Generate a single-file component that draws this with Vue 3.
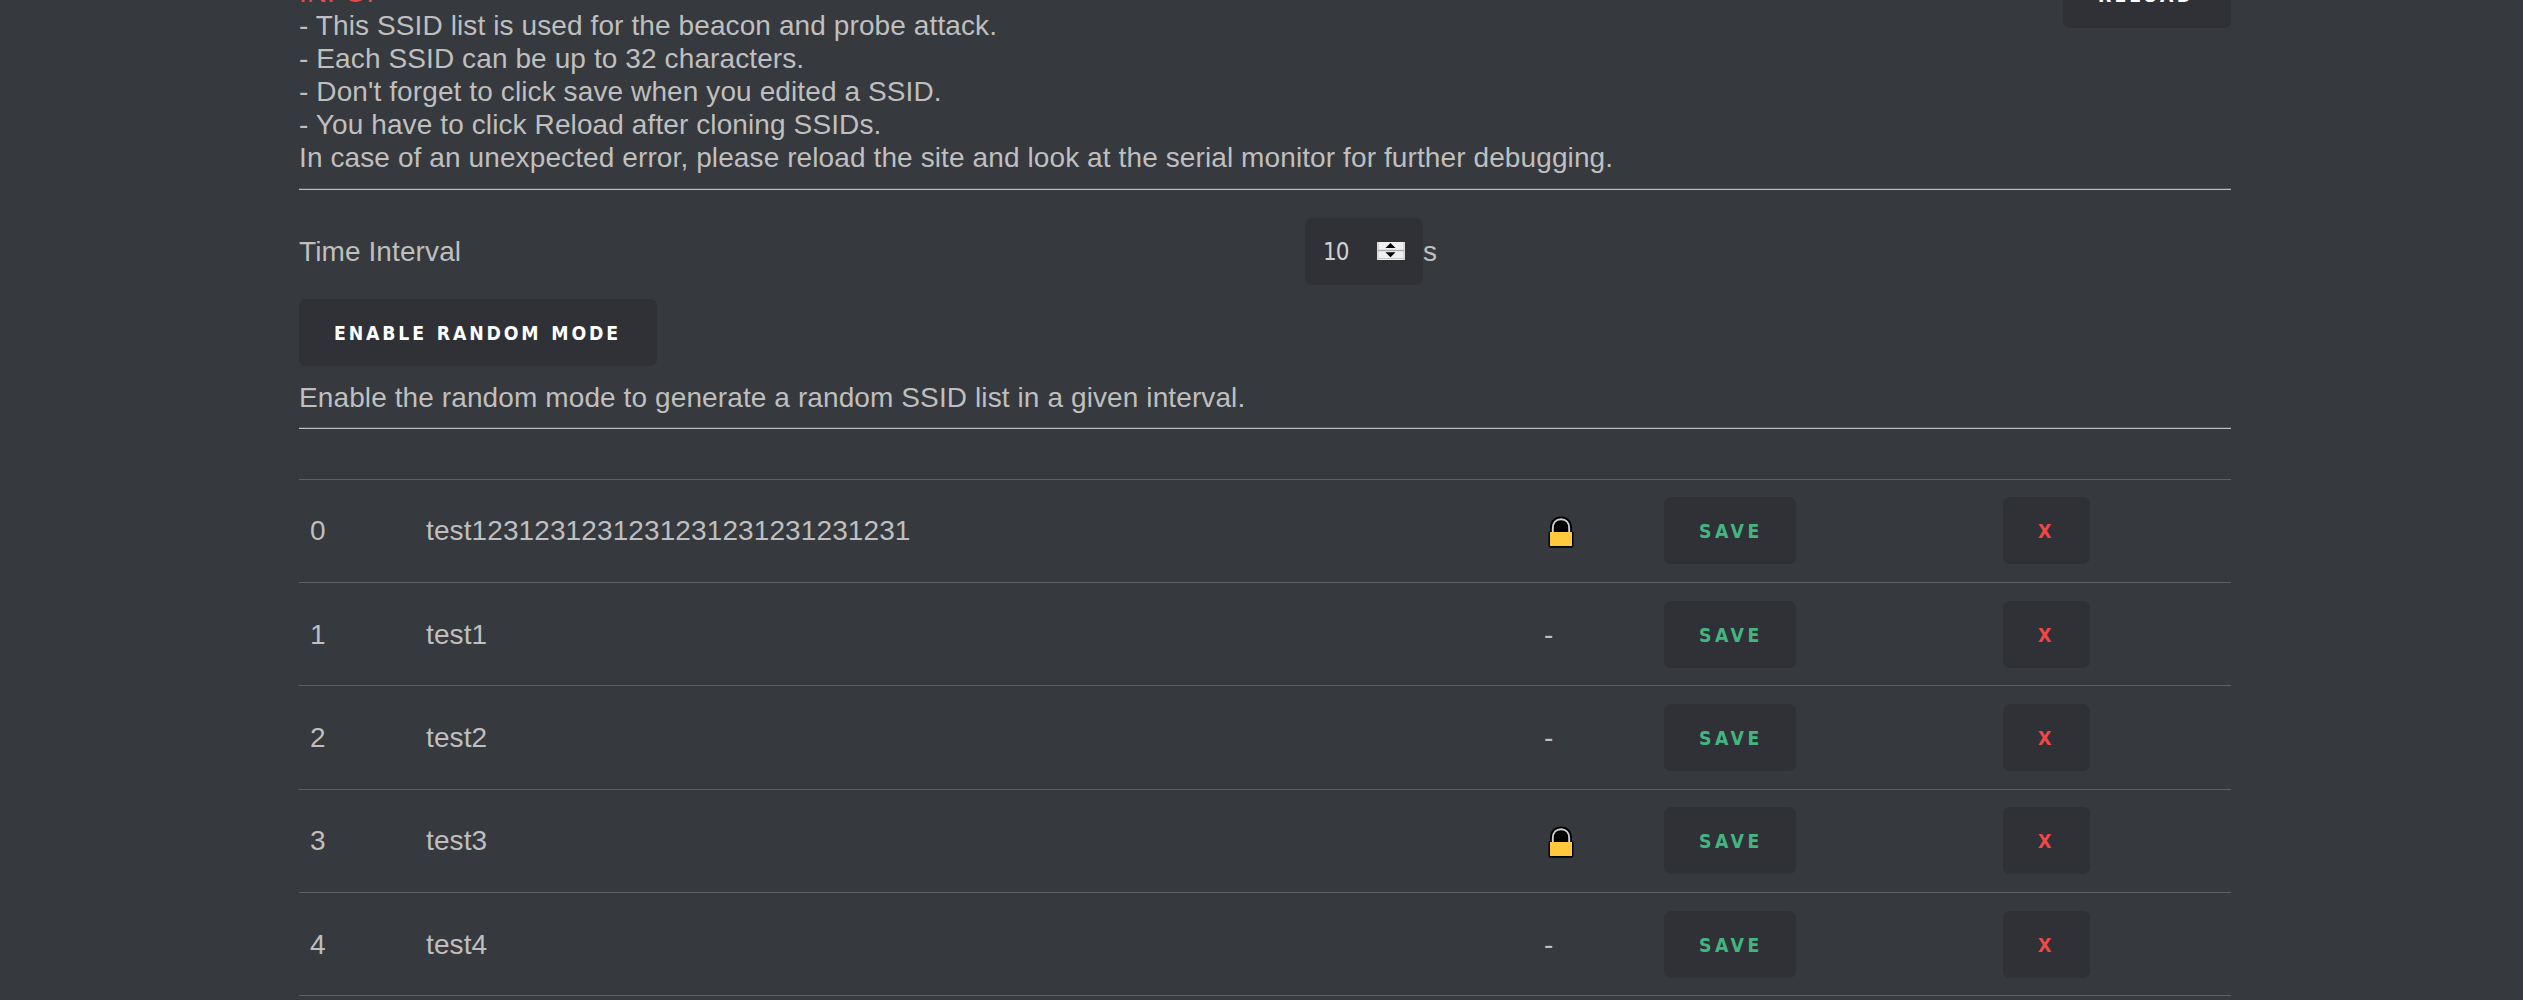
<script setup>
import { ref } from 'vue'

const interval = ref(10)
const ssids = [
  { name: 'test1231231231231231231231231231', locked: true },
  { name: 'test1', locked: false },
  { name: 'test2', locked: false },
  { name: 'test3', locked: true },
  { name: 'test4', locked: false },
]
</script>

<template>
  <main class="page">
    <div class="container">
      <header class="intro">
        <p class="info">
          <span class="red">INFO:</span><br>
          - This SSID list is used for the beacon and probe attack.<br>
          - Each SSID can be up to 32 characters.<br>
          - Don't forget to click save when you edited a SSID.<br>
          - You have to click Reload after cloning SSIDs.<br>
          In case of an unexpected error, please reload the site and look at the serial monitor for further debugging.
        </p>
        <button class="btn reload">Reload</button>
      </header>
      <hr>
      <div class="interval">
        <label class="label">Time Interval</label>
        <div class="number">
          <span class="value">{{ interval }}</span>
          <svg class="spinner" viewBox="0 0 28 18" width="28" height="18">
            <rect width="28" height="18" fill="#f0f0f0" />
            <path d="M1 0V18M27 0V18" stroke="#c4c4c4" />
            <path d="M1 8.500H27" stroke="#a8a8a8" stroke-width="1.400" />
            <path d="M1 16.500H27" stroke="#c8c8c8" />
            <path d="M8.500 6L13.500 1L18.500 6ZM8.500 10.300L13.500 15.300L18.500 10.300Z" fill="#000" />
          </svg>
        </div>
        <span>s</span>
      </div>
      <button class="btn random">Enable random mode</button>
      <p class="hint">Enable the random mode to generate a random SSID list in a given interval.</p>
      <hr class="divider">
      <section class="list">
        <div v-for="(s, i) in ssids" :key="i" class="row">
          <span class="id">{{ i }}</span>
          <span class="name">{{ s.name }}</span>
          <span class="lock">
            <svg v-if="s.locked" viewBox="0 0 26 32" width="26" height="32">
              <path d="M2 15V12C2 5 6 .5 13 .5S24 5 24 12V15Q25.500 15.500 25.500 17V29.500Q25.500 31.800 23.500 31.800H2.500Q.5 31.800 .5 29.500V17Q.5 15.500 2 15Z" fill="#000" />
              <path d="M4.800 16V12C4.800 6.500 8 3.200 13 3.200S21.200 6.500 21.200 12V16" fill="none" stroke="#d2d3d5" stroke-width="1.900" />
              <rect x="2" y="16" width="22" height="14" fill="#ffc83d" />
            </svg>
            <template v-else>-</template>
          </span>
          <span class="save"><button class="btn green">Save</button></span>
          <span class="remove"><button class="btn delete">X</button></span>
        </div>
      </section>
    </div>
  </main>
</template>

<style>
body {
  margin: 0;
  background: #36393e;
}
</style>

<style scoped>
.page {
  height: 1000px;
  overflow: hidden;
  display: flow-root;
  background: #36393e;
  color: #bfbfbf;
  font: 28px/33px "Liberation Sans", Arial, sans-serif;
  letter-spacing: 0.105px;
}
.container {
  width: 1932px;
  margin-left: 299px;
}
.intro {
  display: flex;
  justify-content: space-between;
  align-items: flex-start;
  height: 198px;
  margin-top: -24px;
}
p {
  margin: 0;
}
.red {
  color: #f04747;
}
hr {
  height: 1px;
  margin: 14px 0 0;
  border: 0;
  border-top: 1px solid #54575b;
  background: #bcbdbe;
}
.divider {
  margin-top: 13px;
}
.btn {
  display: block;
  box-sizing: border-box;
  height: 67px;
  padding: 2px 0 0 35px;
  border: 0;
  border-radius: 7px;
  background: #2f3136;
  color: #fff;
  font: bold 19.25px/65px "DejaVu Sans Condensed", "DejaVu Sans", sans-serif;
  font-stretch: condensed;
  letter-spacing: 3.5px;
  text-align: left;
  text-transform: uppercase;
  white-space: nowrap;
}
.reload {
  width: 168px;
  margin-top: -15px;
  letter-spacing: 3.1px;
}
.random {
  width: 358px;
  margin-top: 14px;
  letter-spacing: 2.85px;
  word-spacing: 1px;
}
.interval {
  display: flex;
  align-items: center;
  height: 67px;
  margin-top: 28px;
}
.label {
  width: 1006px;
}
.number {
  display: flex;
  align-items: center;
  box-sizing: border-box;
  width: 118px;
  height: 67px;
  padding: 0 18px 0 18px;
  justify-content: space-between;
  border-radius: 7px;
  background: #2f3136;
}
.spinner {
  margin-bottom: 1px;
}
.value {
  color: #d0d1d2;
  padding-top: 1px;
  font: 24px/33px "DejaVu Sans Condensed", "DejaVu Sans", sans-serif;
  font-stretch: condensed;
  letter-spacing: -1px;
}
.hint {
  margin-top: 15px;
}
.list {
  margin-top: 49.7px;
  border-top: 1px solid #5e6164;
}
.row {
  display: flex;
  align-items: center;
  box-sizing: border-box;
  height: 103.3px;
  border-bottom: 1px solid #5e6164;
}
.id {
  width: 116px;
  padding-left: 11px;
  box-sizing: border-box;
}
.name {
  width: 1129px;
  padding-left: 11px;
  box-sizing: border-box;
}
.lock {
  width: 120px;
}
.lock svg {
  display: block;
  margin: 2px 0 0 4px;
}
.save {
  width: 339px;
}
.green {
  width: 132px;
  color: #43b581;
}
.delete {
  width: 87px;
  color: #f04747;
}
</style>
